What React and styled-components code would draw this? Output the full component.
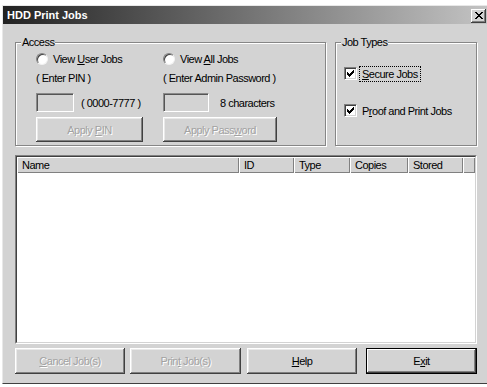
import React from "react";
import styled, { createGlobalStyle } from "styled-components";

const GlobalStyle = createGlobalStyle`
  html, body {
    margin: 0;
    padding: 0;
    background: #fff;
  }
  body {
    font-family: "Liberation Sans", Arial, sans-serif;
    font-size: 11px;
    color: #000;
  }
`;

const Page = styled.div`
  width: 487px;
  height: 387px;
  overflow: hidden;
  padding: 5px 0 0 2px;
  box-sizing: border-box;
`;

const Window = styled.div`
  width: 486px;
  height: 379px;
  box-sizing: border-box;
  background: #d3d3d3;
  border-top: 1px solid #e8e8e8;
  border-left: 1px solid #e8e8e8;
  border-right: 1px solid #404040;
  border-bottom: 1px solid #404040;
  display: flex;
  flex-direction: column;
`;

const TitleBar = styled.div`
  height: 18px;
  display: flex;
  align-items: center;
  justify-content: space-between;
  padding: 0 1px 0 4px;
  background: linear-gradient(to right, #222 0%, #5a5a5a 35%, #c3c3c3 100%);
  color: #fff;
  font-weight: bold;
  font-size: 11px;
  line-height: 18px;
`;

const CloseButton = styled.div`
  width: 15px;
  height: 14px;
  margin-top: 1px;
  display: flex;
  align-items: center;
  justify-content: center;
  background: #d3d3d3;
  box-shadow: inset -1px -1px #404040, inset 1px 1px #fff,
    inset -2px -2px #808080;
`;

const Body = styled.div`
  padding: 18px 0 0 12px;
  display: flex;
  flex-direction: column;
  width: 462px;
  letter-spacing: -0.5px;
`;

const GroupRow = styled.div`
  display: flex;
  gap: 9px;
`;

const Group = styled.div`
  position: relative;
  width: ${(p) => p.$width}px;
  height: 104px;
  box-sizing: border-box;
  border: 1px solid #868686;
  box-shadow: inset 1px 1px #fff, 1px 1px #fff;
`;

const GroupLabel = styled.span`
  position: absolute;
  top: -7px;
  left: 5px;
  padding: 0 1px;
  background: #d3d3d3;
  line-height: 13px;
`;

const AccessBody = styled.div`
  display: flex;
  padding: 10px 0 0 20px;
`;

const Column = styled.div`
  width: ${(p) => (p.$width ? `${p.$width}px` : "auto")};
  display: flex;
  flex-direction: column;
`;

const RadioRow = styled.div`
  display: flex;
  align-items: center;
  gap: 5px;
  height: 12px;
  line-height: 12px;
`;

const Radio = styled.span`
  width: 12px;
  height: 12px;
  box-sizing: border-box;
  border-radius: 50%;
  background: #fff;
  border: 1px solid;
  border-color: #808080 #f2f2f2 #f2f2f2 #808080;
  box-shadow: inset 1px 1px 0 #404040;
`;

const Hint = styled.div`
  margin-top: 7px;
  height: 13px;
  line-height: 13px;
`;

const InputRow = styled.div`
  margin-top: 8px;
  display: flex;
  align-items: center;
  gap: ${(p) => p.$gap}px;
  height: 19px;
`;

const Field = styled.div`
  width: ${(p) => p.$width}px;
  height: 19px;
  box-sizing: border-box;
  background: #d3d3d3;
  border: 1px solid;
  border-color: #8a8a8a #fff #fff #8a8a8a;
  box-shadow: inset 1px 1px #555, inset -1px -1px #d3d3d3;
`;

const Button = styled.div`
  width: ${(p) => p.$width}px;
  height: ${(p) => p.$height || 25}px;
  margin-top: ${(p) => p.$top || 0}px;
  margin-left: ${(p) => p.$left || 0}px;
  box-sizing: border-box;
  display: flex;
  align-items: center;
  justify-content: center;
  background: #d3d3d3;
  color: ${(p) => (p.$disabled ? "#a2a2a2" : "#000")};
  text-shadow: ${(p) => (p.$disabled ? "1px 1px 0 #fff" : "none")};
  box-shadow: ${(p) =>
    p.$default
      ? "inset 0 0 0 1px #000, inset -2px -2px #404040, inset 2px 2px #fff, inset -3px -3px #808080"
      : "inset -1px -1px #404040, inset 1px 1px #fff, inset -2px -2px #808080, inset 2px 2px #e9e9e9"};
`;

const Key = styled.span`
  text-decoration: underline;
  text-underline-offset: 1px;
`;

const TypesBody = styled.div`
  display: flex;
  flex-direction: column;
  gap: 24px;
  padding: 24px 0 0 8px;
`;

const CheckRow = styled.div`
  display: flex;
  align-items: center;
  gap: 3px;
  height: 13px;
`;

const CheckBox = styled.span`
  width: 13px;
  height: 13px;
  box-sizing: border-box;
  display: flex;
  align-items: center;
  justify-content: center;
  background: #fff;
  border: 1px solid;
  border-color: #808080 #fff #fff #808080;
  box-shadow: inset 1px 1px #404040, inset -1px -1px #d3d3d3;
`;

const CheckLabel = styled.span`
  padding: 1px 2px;
  line-height: 12px;
  outline: ${(p) => (p.$focused ? "1px dotted #000" : "none")};
`;

const ListFrame = styled.div`
  margin-top: 9px;
  height: 189px;
  box-sizing: border-box;
  border: 1px solid;
  border-color: #808080 #fff #fff #808080;
`;

const ListInner = styled.div`
  height: 100%;
  box-sizing: border-box;
  border: 1px solid;
  border-color: #404040 #d3d3d3 #d3d3d3 #404040;
  background: #fff;
`;

const Header = styled.div`
  display: flex;
  height: 16px;
  background: #d3d3d3;
`;

const HeaderCell = styled.div`
  width: ${(p) => (p.$width ? `${p.$width}px` : "auto")};
  flex: ${(p) => (p.$width ? "none" : 1)};
  box-sizing: border-box;
  padding-left: 5px;
  line-height: 16px;
  box-shadow: inset 1px 1px #fff, inset -1px -1px #808080;
`;

const Footer = styled.div`
  margin-top: 4px;
  display: flex;
`;

const CloseIcon = () => (
  <svg width="8" height="7" viewBox="0 0 8 7" shapeRendering="crispEdges">
    <path
      d="M0 0H2V1H3V2H5V1H6V0H8V1H7V2H6V3H5V4H6V5H7V6H8V7H6V6H5V5H3V6H2V7H0V6H1V5H2V4H3V3H2V2H1V1H0Z"
      fill="#000"
    />
  </svg>
);

const CheckIcon = () => (
  <svg width="7" height="7" viewBox="0 0 7 7" shapeRendering="crispEdges">
    <path
      d="M0 2H1V3H2V4H3V3H4V2H5V1H6V0H7V3H6V4H5V5H4V6H3V7H2V6H1V5H0Z"
      fill="#000"
    />
  </svg>
);

const columns = [
  { label: "Name", width: 222 },
  { label: "ID", width: 55 },
  { label: "Type", width: 56 },
  { label: "Copies", width: 58 },
  { label: "Stored", width: 55 },
];

export default function App() {
  return (
    <Page>
      <GlobalStyle />
      <Window>
        <TitleBar>
          <span>HDD Print Jobs</span>
          <CloseButton>
            <CloseIcon />
          </CloseButton>
        </TitleBar>
        <Body>
          <GroupRow>
            <Group $width={311}>
              <GroupLabel>Access</GroupLabel>
              <AccessBody>
                <Column $width={127}>
                  <RadioRow>
                    <Radio />
                    <span>
                      View <Key>U</Key>ser Jobs
                    </span>
                  </RadioRow>
                  <Hint>( Enter PIN )</Hint>
                  <InputRow $gap={7}>
                    <Field $width={38} />
                    <span>( 0000-7777 )</span>
                  </InputRow>
                  <Button $width={107} $top={5} $disabled>
                    <span>
                      Apply <Key>P</Key>IN
                    </span>
                  </Button>
                </Column>
                <Column>
                  <RadioRow>
                    <Radio />
                    <span>
                      View <Key>A</Key>ll Jobs
                    </span>
                  </RadioRow>
                  <Hint>( Enter Admin Password )</Hint>
                  <InputRow $gap={11}>
                    <Field $width={46} />
                    <span>8 characters</span>
                  </InputRow>
                  <Button $width={114} $top={5} $disabled>
                    <span>
                      Apply Pass<Key>w</Key>ord
                    </span>
                  </Button>
                </Column>
              </AccessBody>
            </Group>
            <Group $width={142}>
              <GroupLabel>Job Types</GroupLabel>
              <TypesBody>
                <CheckRow>
                  <CheckBox>
                    <CheckIcon />
                  </CheckBox>
                  <CheckLabel $focused>
                    <Key>S</Key>ecure Jobs
                  </CheckLabel>
                </CheckRow>
                <CheckRow>
                  <CheckBox>
                    <CheckIcon />
                  </CheckBox>
                  <CheckLabel>
                    P<Key>r</Key>oof and Print Jobs
                  </CheckLabel>
                </CheckRow>
              </TypesBody>
            </Group>
          </GroupRow>
          <ListFrame>
            <ListInner>
              <Header>
                {columns.map((c) => (
                  <HeaderCell key={c.label} $width={c.width}>
                    {c.label}
                  </HeaderCell>
                ))}
                <HeaderCell />
              </Header>
            </ListInner>
          </ListFrame>
          <Footer>
            <Button $width={110} $height={26} $disabled>
              <span>
                <Key>C</Key>ancel Job(s)
              </span>
            </Button>
            <Button $width={111} $height={26} $left={5} $disabled>
              <span>
                Prin<Key>t</Key> Job(s)
              </span>
            </Button>
            <Button $width={110} $height={26} $left={6}>
              <span>
                <Key>H</Key>elp
              </span>
            </Button>
            <Button $width={111} $height={26} $left={9} $default>
              <span>
                E<Key>x</Key>it
              </span>
            </Button>
          </Footer>
        </Body>
      </Window>
    </Page>
  );
}
